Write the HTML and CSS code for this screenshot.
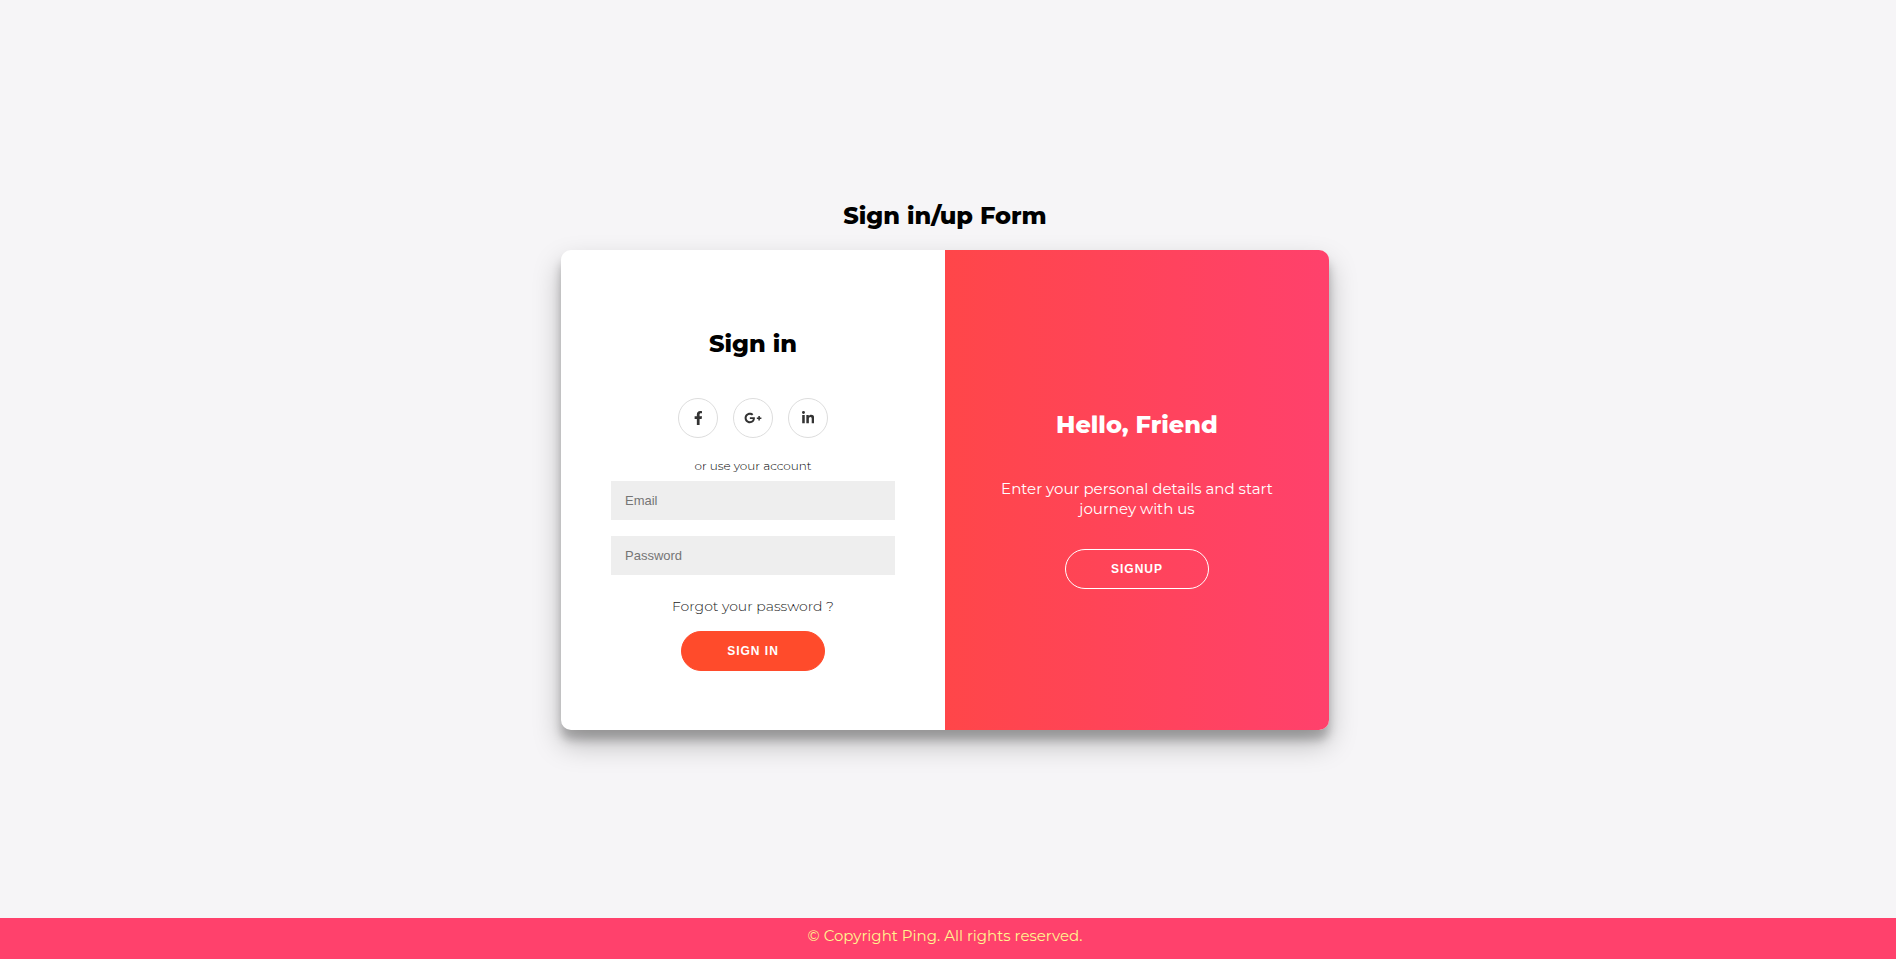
FILE: index.html
```html
<!DOCTYPE html>
<html lang="en">
<head>
<meta charset="utf-8">
<meta name="viewport" content="width=device-width, initial-scale=1">
<title>Sign in/up Form</title>
<link rel="stylesheet" href="styles.css">
</head>
<body class="page">
<main class="main">
  <h1 class="heading page-title">Sign in/up Form</h1>
  <div class="card">
    <form class="panel sign-in">
      <h2 class="heading">Sign in</h2>
      <div class="social">
        <a class="social-link" href="#" aria-label="Facebook">
          <svg class="icon" viewBox="0 0 320 512" aria-hidden="true"><path d="M279.14 288l14.22-92.66h-88.91v-60.13c0-25.35 12.42-50.06 52.24-50.06h40.42V6.26S260.43 0 225.36 0c-73.22 0-121.08 44.38-121.08 124.72v70.62H22.89V288h81.39v224h100.17V288z"/></svg>
        </a>
        <a class="social-link" href="#" aria-label="Google Plus">
          <svg class="icon icon-wide" viewBox="0 0 640 512" aria-hidden="true"><path d="M386.061 228.496c1.834 9.692 3.143 19.384 3.143 31.956C389.204 370.205 315.599 448 204.8 448c-106.084 0-192-85.915-192-192s85.916-192 192-192c51.864 0 95.083 18.859 128.611 50.292l-52.126 50.03c-14.145-13.621-39.028-29.599-76.485-29.599-65.484 0-118.92 54.221-118.92 121.277 0 67.056 53.436 121.277 118.92 121.277 75.961 0 104.513-54.745 108.965-82.773H204.8v-66.009h181.261zm185.406 6.437V179.2h-56.001v55.733h-55.733v56.001h55.733v55.733h56.001v-55.733H627.2v-56.001h-55.733z"/></svg>
        </a>
        <a class="social-link" href="#" aria-label="LinkedIn">
          <svg class="icon" viewBox="0 0 448 512" aria-hidden="true"><path d="M100.28 448H7.4V148.9h92.88zM53.79 108.1C24.09 108.1 0 83.5 0 53.8a53.79 53.79 0 0 1 107.58 0c0 29.7-24.1 54.3-53.79 54.3zM447.9 448h-92.68V302.4c0-34.7-.7-79.2-48.29-79.2-48.29 0-55.69 37.7-55.69 76.7V448h-92.78V148.9h89.08v40.8h1.3c12.4-23.5 42.69-48.3 87.88-48.3 94 0 111.28 61.9 111.28 142.3V448z"/></svg>
        </a>
      </div>
      <span class="hint">or use your account</span>
      <div class="fields">
        <input class="field" type="email" placeholder="Email" aria-label="Email">
        <input class="field" type="password" placeholder="Password" aria-label="Password">
      </div>
      <a class="forgot" href="#">Forgot your password ?</a>
      <button class="button" type="submit">SIGN IN</button>
    </form>
    <section class="panel welcome">
      <h2 class="heading welcome-title">Hello, Friend</h2>
      <p class="welcome-text">Enter your personal details and start journey with us</p>
      <button class="button button-ghost" type="button">SIGNUP</button>
    </section>
  </div>
</main>
<footer class="footer">© Copyright Ping. All rights reserved.</footer>
</body>
</html>
```
FILE: styles.css
```css
* {
  box-sizing: border-box;
}

.page {
  display: flex;
  flex-direction: column;
  min-height: 100vh;
  margin: 0;
  background: #f6f5f7;
  color: #000;
  font-family: "Montserrat", Inter, sans-serif;
}

.main {
  display: flex;
  flex: 1;
  flex-direction: column;
  align-items: center;
  justify-content: center;
  padding: 12px 6px 0 0;
}

.heading {
  margin: 0;
  font-size: 24px;
  font-weight: 800;
  line-height: 32px;
}

.page-title {
  margin-bottom: 18px;
}

.card {
  display: grid;
  grid-template-columns: 1fr 1fr;
  width: 100%;
  max-width: 768px;
  min-height: 480px;
  overflow: hidden;
  border-radius: 10px;
  background: #fff;
  box-shadow: 0 14px 28px rgba(0, 0, 0, 0.25), 0 10px 10px rgba(0, 0, 0, 0.22);
}

.panel {
  display: flex;
  flex-direction: column;
  align-items: center;
  justify-content: center;
  text-align: center;
}

.sign-in {
  padding: 18px 50px 0;
}

.social {
  display: flex;
  gap: 15px;
  margin: 38px 0 20px;
}

.social-link {
  display: flex;
  align-items: center;
  justify-content: center;
  width: 40px;
  height: 40px;
  border: 1px solid #ddd;
  border-radius: 50%;
}

.icon {
  height: 14px;
  fill: #333;
}

.icon-wide {
  width: 18px;
}

.hint {
  font-size: 12px;
  font-weight: 300;
  line-height: 16px;
}

.fields {
  display: grid;
  gap: 16px;
  width: 100%;
  margin: 7px 0 21px;
}

.field {
  width: 100%;
  padding: 12px 14px;
  border: 0;
  background: #eee;
  font-family: "Liberation Sans", Arial, sans-serif;
  font-size: 13px;
  line-height: 15px;
}

.forgot {
  margin-bottom: 15px;
  color: #222;
  font-size: 14px;
  font-weight: 300;
  line-height: 20px;
  text-decoration: none;
}

.button {
  padding: 12px 45px;
  border: 1px solid #ff4b2b;
  border-radius: 20px;
  background: #ff4b2b;
  color: #fff;
  font-family: "Liberation Sans", Arial, sans-serif;
  font-size: 12px;
  font-weight: 700;
  letter-spacing: 1px;
  line-height: 14px;
}

.button-ghost {
  border-color: #fff;
  background: transparent;
}

.welcome {
  padding: 17px 40px 0;
  background: linear-gradient(to right, #ff4649, #ff416c);
  color: #fff;
}

.welcome-text {
  margin: 38px 0 30px;
  font-size: 15px;
  line-height: 20px;
}

.footer {
  padding: 8px 6px 13px 0;
  background: #ff416c;
  color: #fff68f;
  font-size: 15px;
  line-height: 20px;
  text-align: center;
}
```
